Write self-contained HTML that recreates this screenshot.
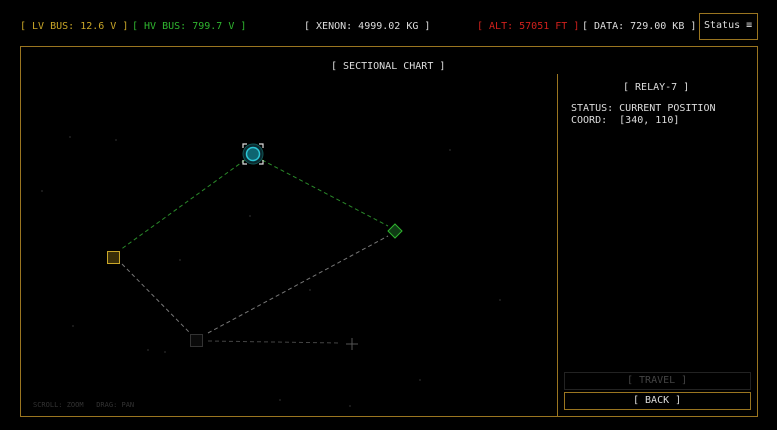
<!DOCTYPE html>
<html><head><style>
body{margin:0;width:777px;height:430px;background:#000;overflow:hidden;font-family:"DejaVu Sans Mono","Liberation Mono",monospace;font-size:10px;color:#ddd;position:relative}
.t{position:absolute;white-space:pre;top:21px}
.box{position:absolute;border:1px solid #9a7520}
</style></head><body>
<div class="t" style="left:20px;color:#c9a628">[ LV BUS: 12.6 V ]</div>
<div class="t" style="left:132px;color:#2fb52f">[ HV BUS: 799.7 V ]</div>
<div class="t" style="left:304px;color:#ddd">[ XENON: 4999.02 KG ]</div>
<div class="t" style="left:477px;color:#d0201c">[ ALT: 57051 FT ]</div>
<div class="t" style="left:582px;color:#ddd">[ DATA: 729.00 KB ]</div>
<div class="box" style="left:699px;top:13px;width:57px;height:25px;"></div>
<div class="t" style="left:704px;top:20px;color:#ddd">Status ≡</div>
<div class="box" style="left:20px;top:46px;width:736px;height:369px"></div>
<div style="position:absolute;left:557px;top:74px;width:1px;height:342px;background:#9a7520"></div>
<div class="t" style="left:331px;top:61px">[ SECTIONAL CHART ]</div>
<div class="t" style="left:623px;top:82px">[ RELAY-7 ]</div>
<div class="t" style="left:571px;top:103px;line-height:12px">STATUS: CURRENT POSITION
COORD:  [340, 110]</div>
<div class="t" style="left:33px;top:401px;font-size:7px;color:#333">SCROLL: ZOOM   DRAG: PAN</div>
<svg width="777" height="430" style="position:absolute;left:0;top:0">
<g fill="#222">
<circle cx="70" cy="137" r="1"/><circle cx="116" cy="140" r="1"/><circle cx="42" cy="191" r="1"/><circle cx="180" cy="260" r="1"/><circle cx="250" cy="216" r="1"/><circle cx="148" cy="350" r="1"/><circle cx="165" cy="352" r="1"/><circle cx="310" cy="290" r="1"/><circle cx="73" cy="326" r="1"/><circle cx="450" cy="150" r="1"/><circle cx="500" cy="300" r="1"/><circle cx="420" cy="380" r="1"/><circle cx="280" cy="400" r="1"/><circle cx="350" cy="406" r="1"/>
</g>
<g stroke-dasharray="4,3" stroke-width="1" fill="none">
<line x1="245" y1="160" x2="120" y2="250" stroke="#2a8a2a"/>
<line x1="262" y1="160" x2="388" y2="226" stroke="#2a8a2a"/>
<line x1="122" y1="264" x2="190" y2="333" stroke="#777"/>
<line x1="208" y1="333" x2="388" y2="236" stroke="#777"/>
<line x1="208" y1="341" x2="340" y2="343" stroke="#444"/>
</g>
<line x1="346" y1="344" x2="358" y2="344" stroke="#555"/>
<line x1="352" y1="338" x2="352" y2="350" stroke="#555"/>
<circle cx="253" cy="154" r="10" fill="#0a2a30" stroke="#155" />
<circle cx="253" cy="154" r="6.5" fill="#0e6470" stroke="#2cc6d6" stroke-width="1.5"/>
<path d="M243 148v-4h4M259 144h4v4M263 160v4h-4M247 164h-4v-4" stroke="#ddd" fill="none" stroke-width="1.2"/>
<rect x="107.5" y="251.5" width="12" height="12" fill="#3a2e08" stroke="#c9a628"/>
<path d="M395 224l7 7-7 7-7-7z" fill="#0f3a14" stroke="#2fb52f"/>
<rect x="190.5" y="334.5" width="12" height="12" fill="#0a0a0a" stroke="#333"/>
</svg>
<div class="box" style="left:564px;top:372px;width:185px;height:16px;border-color:#222"></div>
<div class="t" style="left:627px;top:375px;color:#444">[ TRAVEL ]</div>
<div class="box" style="left:564px;top:392px;width:185px;height:16px"></div>
<div class="t" style="left:633px;top:395px;color:#ddd">[ BACK ]</div>
</body></html>
